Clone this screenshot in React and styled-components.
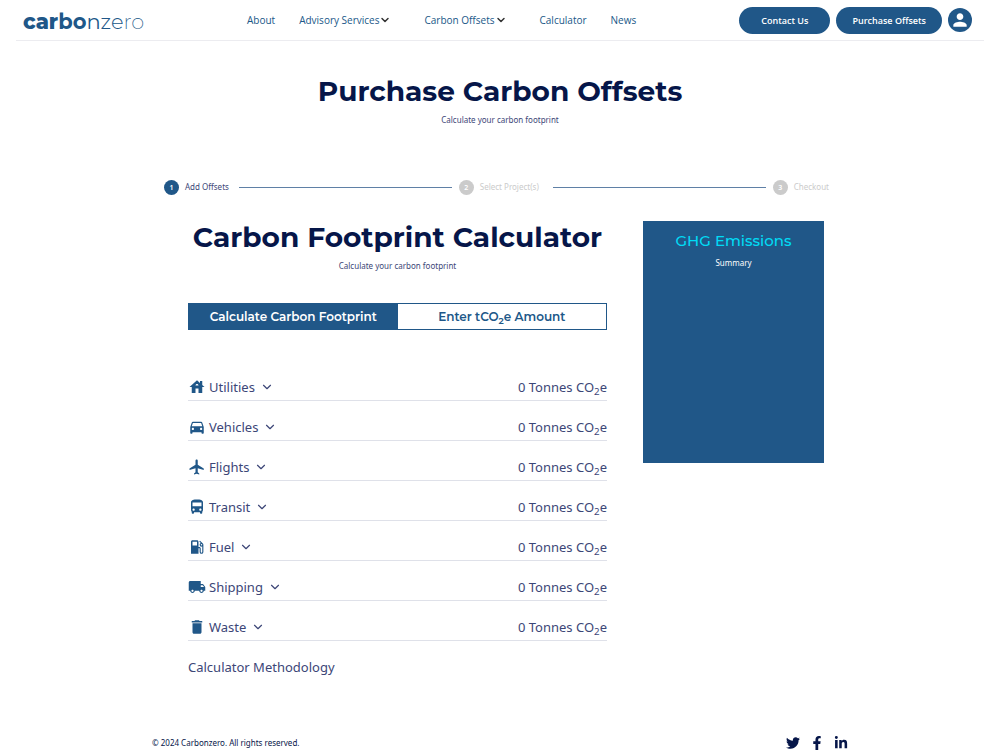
import React from "react";
import styled, { createGlobalStyle } from "styled-components";
import {
  MdHouse,
  MdDirectionsCar,
  MdFlight,
  MdDirectionsBus,
  MdLocalGasStation,
  MdLocalShipping,
  MdDelete,
  MdPerson,
} from "react-icons/md";
import { FaTwitter, FaFacebookF, FaLinkedinIn } from "react-icons/fa";
import { FiChevronDown } from "react-icons/fi";

const blue = "#205788";
const navy = "#061649";
const ink = "#3c4677";
const muted = "#cbcbcb";
const heading = '"Montserrat", "Inter", sans-serif';
const body = '"Noto Sans", "Open Sans", sans-serif';
const menuFont = '"Open Sans", "Noto Sans", sans-serif';

const GlobalStyle = createGlobalStyle`
  *, *::before, *::after { box-sizing: border-box; }
  body { margin: 0; background: #fff; color: ${ink}; font-family: ${body}; }
  h1, h2, h3, p, ul, ol { margin: 0; padding: 0; }
  ul, ol { list-style: none; }
  button { font: inherit; cursor: pointer; }
  a { color: inherit; text-decoration: none; }
  svg { display: block; flex: none; }
`;

const Header = styled.header`
  display: flex;
  align-items: center;
  justify-content: space-between;
  height: 41px;
  margin: 0 16px;
  padding: 0 12px 0 7px;
  border-bottom: 1px solid #ececf0;
  font-family: ${menuFont};
`;

const Logo = styled.a`
  flex: 0 0 224px;
  padding-top: 4px;
  font-family: ${heading};
  font-size: 21px;
  line-height: 36px;
  color: ${blue};
`;

const LogoPart = styled.span`
  font-weight: ${(p) => p.$weight};
`;

const Nav = styled.nav`
  display: flex;
  flex: 1;
  gap: 24px;
`;

const NavLink = styled.a`
  display: flex;
  align-items: center;
  margin-right: ${(p) => (p.$menu ? 9 : 0)}px;
  font-size: 10px;
  line-height: 16px;
  color: ${blue};
  white-space: nowrap;

  svg { color: #333; }
`;

const Actions = styled.div`
  display: flex;
  align-items: center;
  gap: 6px;
`;

const PillButton = styled.button`
  height: 27px;
  padding: 0 ${(p) => (p.$wide ? 22 : 16)}px;
  border: 0;
  border-radius: 14px;
  background: ${blue};
  color: #fff;
  font-size: 9px;
  font-weight: 600;
  white-space: nowrap;
`;

const Avatar = styled.button`
  display: grid;
  place-items: center;
  width: 24px;
  height: 24px;
  padding: 0;
  border: 0;
  border-radius: 50%;
  background: ${blue};
  color: #fff;
`;

const Container = styled.main`
  width: 100%;
  max-width: 696px;
  margin: 0 auto;
`;

const TitleBlock = styled.div`
  padding-top: ${(p) => p.$top}px;
  text-align: center;
`;

const Title = styled.h1`
  font-family: ${heading};
  font-size: 28px;
  font-weight: 700;
  line-height: 36px;
  color: ${navy};
  white-space: nowrap;
`;

const Subtitle = styled.p`
  margin-top: 5px;
  font-size: 8px;
  line-height: 12px;
  color: ${(p) => p.$color || ink};
`;

const Stepper = styled.ol`
  display: flex;
  align-items: center;
  margin: 53px 19px 0 12px;
`;

const Step = styled.li`
  display: flex;
  align-items: center;
  gap: 6px;
  font-size: 8px;
  line-height: 16px;
  color: ${(p) => (p.$active ? ink : muted)};
  white-space: nowrap;
`;

const StepNumber = styled.span`
  display: grid;
  place-items: center;
  width: 15px;
  height: 15px;
  border-radius: 50%;
  background: ${(p) => (p.$active ? blue : muted)};
  color: #fff;
  font-size: 7px;
  font-weight: 600;
`;

const StepLine = styled.li`
  flex: 1;
  height: 1px;
  margin: 0 7px 0 ${(p) => p.$left}px;
  background: #5f80a6;
`;

const Columns = styled.div`
  display: grid;
  grid-template-columns: minmax(0, 419fr) minmax(0, 181fr);
  gap: 36px;
  padding: 0 24px 0 36px;
`;

const Tabs = styled.div`
  display: grid;
  grid-template-columns: 1fr 1fr;
  margin-top: 31px;
  border: 1px solid ${blue};
`;

const Tab = styled.button`
  height: 25px;
  padding: 0;
  border: 0;
  background: ${(p) => (p.$active ? blue : "#fff")};
  color: ${(p) => (p.$active ? "#fff" : blue)};
  font-family: ${heading};
  font-size: 12px;
  font-weight: 600;
  line-height: 24px;
`;

const Sub = styled.sub`
  font-size: 75%;
  line-height: 0;
  vertical-align: -3px;
`;

const CategoryList = styled.ul`
  margin-top: 31px;
`;

const Category = styled.li`
  display: flex;
  align-items: flex-end;
  justify-content: space-between;
  height: 40px;
  padding-bottom: 3px;
  border-bottom: 1px solid #dfe1e9;
  font-size: 13px;
  line-height: 20px;
`;

const CategoryToggle = styled.button`
  display: flex;
  align-items: center;
  padding: 0;
  border: 0;
  background: none;
  color: inherit;
  line-height: 20px;

  svg:first-child { color: ${blue}; }
`;

const CategoryName = styled.span`
  margin: 0 5px 0 3px;
`;

const Methodology = styled.a`
  display: inline-block;
  margin-top: 16px;
  font-size: 13px;
  line-height: 20px;
`;

const Summary = styled.aside`
  height: 242px;
  margin-top: 26px;
  padding-top: 9px;
  background: ${blue};
  text-align: center;
`;

const SummaryTitle = styled.h3`
  font-family: ${heading};
  font-size: 15px;
  font-weight: 500;
  line-height: 22px;
  color: #00dcf5;
`;

const Footer = styled.footer`
  display: flex;
  align-items: center;
  justify-content: space-between;
  width: 100%;
  max-width: 696px;
  margin: 0 auto;
  padding-top: 59px;
  color: ${navy};
  font-size: 8px;
  line-height: 14px;
`;

const Social = styled.div`
  display: flex;
  gap: 10px;
`;

const categories = [
  ["Utilities", MdHouse],
  ["Vehicles", MdDirectionsCar],
  ["Flights", MdFlight],
  ["Transit", MdDirectionsBus],
  ["Fuel", MdLocalGasStation],
  ["Shipping", MdLocalShipping],
  ["Waste", MdDelete],
];

export default function App() {
  return (
    <>
      <GlobalStyle />
      <Header>
        <Logo href="#">
          <LogoPart $weight={800}>car</LogoPart>
          <LogoPart $weight={700}>bo</LogoPart>
          <LogoPart $weight={400}>n</LogoPart>
          <LogoPart $weight={300}>ze</LogoPart>
          <LogoPart $weight={200}>ro</LogoPart>
        </Logo>
        <Nav>
          <NavLink href="#">About</NavLink>
          <NavLink href="#" $menu>Advisory Services <FiChevronDown size={12} strokeWidth={3} /></NavLink>
          <NavLink href="#" $menu>Carbon Offsets <FiChevronDown size={12} strokeWidth={3} /></NavLink>
          <NavLink href="#">Calculator</NavLink>
          <NavLink href="#">News</NavLink>
        </Nav>
        <Actions>
          <PillButton $wide>Contact Us</PillButton>
          <PillButton>Purchase Offsets</PillButton>
          <Avatar aria-label="Account"><MdPerson size={20} /></Avatar>
        </Actions>
      </Header>

      <Container>
        <TitleBlock $top={32}>
          <Title>Purchase Carbon Offsets</Title>
          <Subtitle>Calculate your carbon footprint</Subtitle>
        </TitleBlock>

        <Stepper>
          <Step $active><StepNumber $active>1</StepNumber>Add Offsets</Step>
          <StepLine $left={10} />
          <Step><StepNumber>2</StepNumber>Select Project(s)</Step>
          <StepLine $left={14} />
          <Step><StepNumber>3</StepNumber>Checkout</Step>
        </Stepper>

        <Columns>
          <section>
            <TitleBlock $top={24}>
              <Title as="h2">Carbon Footprint Calculator</Title>
              <Subtitle>Calculate your carbon footprint</Subtitle>
            </TitleBlock>
            <Tabs>
              <Tab $active>Calculate Carbon Footprint</Tab>
              <Tab>Enter tCO<Sub>2</Sub>e Amount</Tab>
            </Tabs>
            <CategoryList>
              {categories.map(([name, Icon]) => (
                <Category key={name}>
                  <CategoryToggle>
                    <Icon size={18} />
                    <CategoryName>{name}</CategoryName>
                    <FiChevronDown size={14} />
                  </CategoryToggle>
                  <span>0 Tonnes CO<Sub>2</Sub>e</span>
                </Category>
              ))}
            </CategoryList>
            <Methodology href="#">Calculator Methodology</Methodology>
          </section>
          <Summary>
            <SummaryTitle>GHG Emissions</SummaryTitle>
            <Subtitle $color="#fff">Summary</Subtitle>
          </Summary>
        </Columns>
      </Container>

      <Footer>
        <p>© 2024 Carbonzero. All rights reserved.</p>
        <Social>
          <a href="#" aria-label="Twitter"><FaTwitter size={14} /></a>
          <a href="#" aria-label="Facebook"><FaFacebookF size={14} /></a>
          <a href="#" aria-label="LinkedIn"><FaLinkedinIn size={14} /></a>
        </Social>
      </Footer>
    </>
  );
}
